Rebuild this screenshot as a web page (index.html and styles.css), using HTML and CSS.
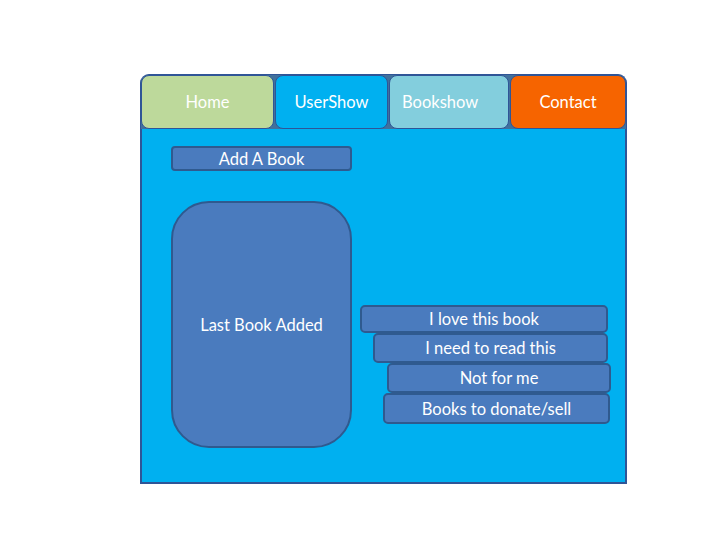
FILE: index.html
```html
<!DOCTYPE html>
<html lang="en">
<head>
  <meta charset="UTF-8" />
  <title>Books</title>
  <link rel="stylesheet" href="styles.css">
</head>
<body>
  <div class="page">
    <nav class="tabs">
      <a class="tab home" href="#">Home</a>
      <a class="tab users" href="#">UserShow</a>
      <a class="tab books" href="#">Bookshow</a>
      <a class="tab contact" href="#">Contact</a>
    </nav>
    <section class="panel">
      <div class="left">
        <button class="box add">Add A Book</button>
        <div class="box last">Last Book Added</div>
      </div>
      <div class="shelves">
        <button class="box shelf s1">I love this book</button>
        <button class="box shelf s2">I need to read this</button>
        <button class="box shelf s3">Not for me</button>
        <button class="box shelf s4">Books to donate/sell</button>
      </div>
    </section>
  </div>
</body>
</html>
```

FILE: styles.css
```css
body {
  margin: 0;
  background: #FFFFFF;
  font-family: Lato, "Open Sans", sans-serif;
  color: #FFFFFF;
}
.page {
  width: 487px;
  padding: 74px 0 0 140px;
}
.tabs {
  display: flex;
  gap: 1px;
  height: 55px;
  background: #41719C;
  border: 1px solid #2F5597;
  border-bottom: none;
  border-radius: 9px 9px 0 0;
  box-sizing: border-box;
}
.tab {
  display: flex;
  align-items: center;
  justify-content: center;
  color: #FFFFFF;
  text-decoration: none;
  font-size: 16.5px;
  border: 1px solid #2F5597;
  border-radius: 8px;
  box-sizing: border-box;
}
.home { width: 133px; background: #BDD99B; }
.users { width: 113px; background: #00B0F0; }
.books { width: 120px; background: #83CEDD; justify-content: flex-start; padding-left: 12px; }
.contact { flex: 1; background: #F66400; }
.panel {
  display: flex;
  gap: 8px;
  height: 355px;
  padding: 17px 0 0 29px;
  background: #00B0F0;
  border: 2px solid #2F5597;
  border-top: none;
  box-sizing: border-box;
}
.left {
  display: flex;
  flex-direction: column;
  gap: 30px;
  width: 181px;
}
.box {
  display: flex;
  align-items: center;
  justify-content: center;
  background: #4A7BBE;
  border: 2px solid #2F5A8F;
  color: #FFFFFF;
  font-family: inherit;
  font-size: 16.5px;
  box-sizing: border-box;
  padding: 0;
}
.add {
  height: 25px;
  border-radius: 4px;
}
.last {
  height: 247px;
  border-radius: 38px;
}
.shelves {
  display: flex;
  flex-direction: column;
  margin-top: 159px;
}
.shelf {
  border-radius: 5px;
}
.s1 { width: 248px; height: 28px; }
.s2 { width: 235px; height: 30px; margin-left: 13px; }
.s3 { width: 224px; height: 30px; margin-left: 27px; }
.s4 { width: 227px; height: 31px; margin-left: 23px; }
```
